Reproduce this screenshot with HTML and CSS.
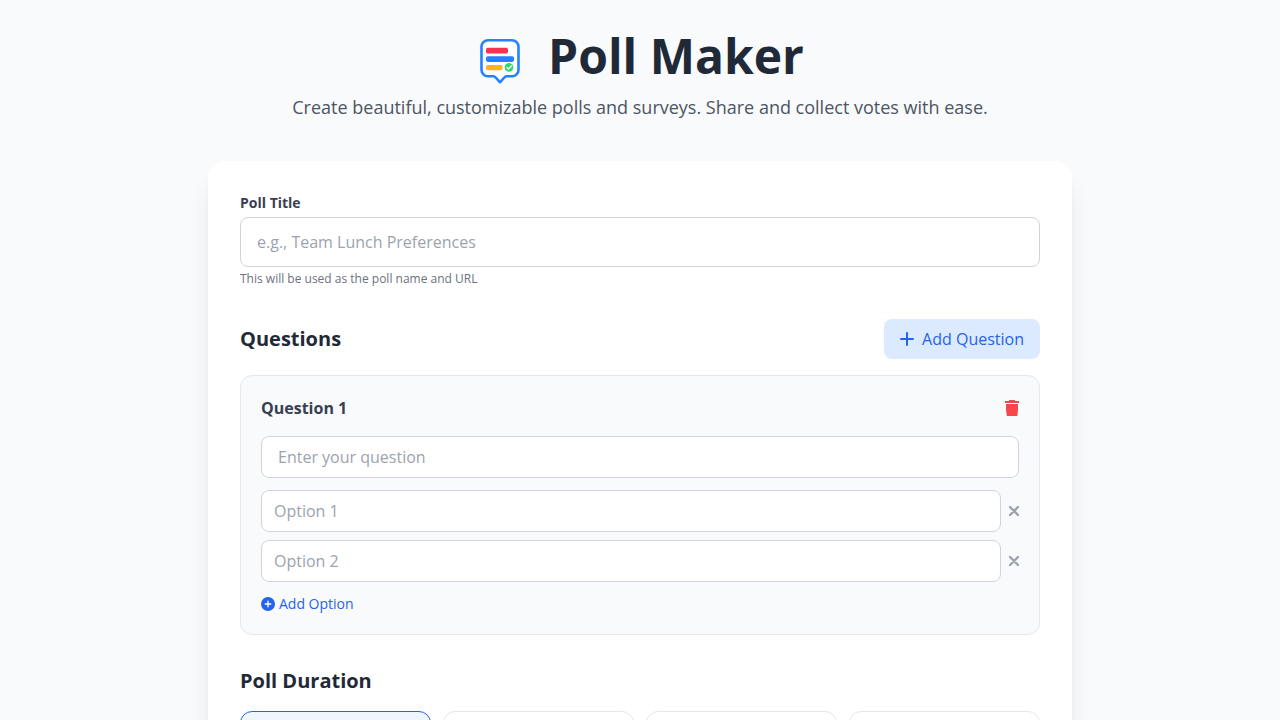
FILE: index.html
```html
<!DOCTYPE html>
<html lang="en">
<head>
    <meta charset="UTF-8">
    <meta name="viewport" content="width=device-width, initial-scale=1.0">
    <title>Poll Maker</title>
    <link rel="stylesheet" href="styles.css">
</head>
<body>
    <div class="container">
        <header class="header">
            <h1>
                <svg class="logo" viewBox="0 0 48 48" aria-hidden="true">
                    <path d="M12 4.200h24a6.500 6.500 0 0 1 6.500 6.500v23a6.500 6.500 0 0 1-6.500 6.500h-5.500c-2.500 0-4.300 4.500-6.500 6-2.200-1.500-4-6-6.500-6H12a6.500 6.500 0 0 1-6.500-6.500v-23A6.500 6.500 0 0 1 12 4.200z" fill="#fff" stroke="#2582ff" stroke-width="2.600" stroke-linejoin="round"/>
                    <rect x="10" y="11.700" width="22" height="5.800" rx="1.800" fill="#f9324f"/>
                    <rect x="10" y="20.300" width="28" height="5.600" rx="1.800" fill="#2380ff"/>
                    <rect x="10" y="29" width="16.500" height="5.200" rx="1.600" fill="#ffb320"/>
                    <circle cx="33" cy="31.400" r="4.300" fill="#34d670"/>
                    <path d="M31 31.500l1.500 1.500 2.800-3" fill="none" stroke="#fff" stroke-width="1.400" stroke-linecap="round" stroke-linejoin="round"/>
                </svg>
                Poll Maker
            </h1>
            <p>Create beautiful, customizable polls and surveys. Share and collect votes with ease.</p>
        </header>

        <form class="card">
            <div class="section">
                <label class="field-label" for="poll-title">Poll Title</label>
                <input class="input input-title" type="text" id="poll-title" placeholder="e.g., Team Lunch Preferences">
                <p class="help">This will be used as the poll name and URL</p>
            </div>

            <div class="section">
                <div class="section-header">
                    <h2>Questions</h2>
                    <button class="add-question" type="button">
                        <svg width="14" height="14" viewBox="0 0 14 14" aria-hidden="true">
                            <path d="M7 1v12M1 7h12" fill="none" stroke="currentColor" stroke-width="2" stroke-linecap="round"/>
                        </svg>
                        Add Question
                    </button>
                </div>

                <div class="question">
                    <div class="question-header">
                        <h3><label for="question-1">Question 1</label></h3>
                        <button class="delete-question" type="button" aria-label="Delete question">
                            <svg width="14" height="16" viewBox="0 0 14 16" aria-hidden="true">
                                <path d="M0 1h4V0h6v1h4v2H0zM1 4h12v6l-.6 6H1.900L1 10z" fill="currentColor"/>
                            </svg>
                        </button>
                    </div>
                    <input class="input" type="text" id="question-1" placeholder="Enter your question">

                    <div class="options">
                        <div class="option">
                            <input class="input" type="text" placeholder="Option 1" aria-label="Option 1">
                            <button type="button" aria-label="Remove option 1">
                                <svg width="10" height="10" viewBox="0 0 10 10" aria-hidden="true">
                                    <path d="M1 1l8 8M9 1L1 9" fill="none" stroke="currentColor" stroke-width="2.400" stroke-linecap="round"/>
                                </svg>
                            </button>
                        </div>
                        <div class="option">
                            <input class="input" type="text" placeholder="Option 2" aria-label="Option 2">
                            <button type="button" aria-label="Remove option 2">
                                <svg width="10" height="10" viewBox="0 0 10 10" aria-hidden="true">
                                    <path d="M1 1l8 8M9 1L1 9" fill="none" stroke="currentColor" stroke-width="2.400" stroke-linecap="round"/>
                                </svg>
                            </button>
                        </div>
                    </div>

                    <button class="add-option" type="button">
                        <svg width="14" height="14" viewBox="0 0 14 14" aria-hidden="true">
                            <circle cx="7" cy="7" r="7" fill="currentColor"/>
                            <path d="M7 4.200v5.600M4.200 7h5.600" fill="none" stroke="#fff" stroke-width="1.300" stroke-linecap="round"/>
                        </svg>
                        Add Option
                    </button>
                </div>
            </div>

            <div class="section">
                <h2>Poll Duration</h2>
                <div class="durations">
                    <label class="duration"><input type="radio" name="duration" checked></label>
                    <label class="duration"><input type="radio" name="duration"></label>
                    <label class="duration"><input type="radio" name="duration"></label>
                    <label class="duration"><input type="radio" name="duration"></label>
                </div>
            </div>
        </form>
    </div>
</body>
</html>
```
FILE: styles.css
```css
* {
    box-sizing: border-box;
    margin: 0;
    padding: 0;
}

body {
    font-family: "Open Sans", sans-serif;
    font-size: 16px;
    line-height: 24px;
    min-height: 100vh;
    background-color: #f9fafb;
    color: #1f2937;
}

button,
input {
    font: inherit;
}

button {
    border: none;
    background: none;
    cursor: pointer;
}

svg {
    display: block;
    flex-shrink: 0;
}

.container {
    max-width: 896px;
    margin: 0 auto;
    padding: 32px 16px;
}

.header {
    text-align: center;
    margin-bottom: 40px;
}

h1 {
    display: flex;
    justify-content: center;
    align-items: flex-start;
    gap: 24px;
    margin-bottom: 9px;
    font-size: 48px;
    line-height: 48px;
    font-weight: 700;
}

.logo {
    width: 48px;
    height: 48px;
    margin-top: 4px;
}

.header p {
    font-size: 18px;
    line-height: 28px;
    color: #4b5563;
}

.card {
    padding: 32px;
    border-radius: 16px;
    background-color: #fff;
    box-shadow: 0 20px 25px -5px rgba(0, 0, 0, 0.1), 0 8px 10px -6px rgba(0, 0, 0, 0.1);
}

.section {
    margin-bottom: 32px;
}

.field-label {
    display: block;
    margin-bottom: 4px;
    font-size: 14px;
    line-height: 20px;
    font-weight: 700;
    color: #374151;
}

.input {
    display: block;
    width: 100%;
    height: 42px;
    padding: 8px 16px;
    border: 1px solid #d1d5db;
    border-radius: 8px;
    background-color: #fff;
    color: #1f2937;
}

.input-title {
    height: 50px;
}

.input::placeholder {
    color: #9ca3af;
}

.help {
    margin-top: 4px;
    font-size: 12px;
    line-height: 16px;
    color: #6b7280;
}

.section-header,
.question-header {
    display: flex;
    justify-content: space-between;
    align-items: center;
    margin-bottom: 16px;
}

h2 {
    font-size: 20px;
    line-height: 28px;
    font-weight: 700;
}

h3 {
    font-size: 16px;
    font-weight: 700;
    color: #374151;
}

.add-question {
    display: flex;
    align-items: center;
    gap: 8px;
    padding: 8px 16px;
    border-radius: 8px;
    background-color: #dbeafe;
    color: #2563eb;
}

.question {
    padding: 20px;
    border: 1px solid #e5e7eb;
    border-radius: 12px;
    background-color: #f9fafb;
}

.delete-question {
    color: #f8474b;
}

.options {
    display: grid;
    gap: 8px;
    margin: 12px 0;
}

.option {
    display: flex;
    align-items: center;
    gap: 8px;
}

.option .input {
    flex: 1;
    padding: 8px 12px;
}

.option button {
    color: #9ca3af;
}

.add-option {
    display: flex;
    align-items: center;
    gap: 4px;
    font-size: 14px;
    line-height: 20px;
    color: #2563eb;
}

.durations {
    display: grid;
    grid-template-columns: repeat(4, 1fr);
    gap: 12px;
    margin-top: 16px;
}

.duration {
    height: 60px;
    border: 1px solid #e5e7eb;
    border-radius: 12px;
    cursor: pointer;
}

.duration:has(input:checked) {
    border-color: #2563eb;
    background-color: #eff6ff;
}

.duration input {
    appearance: none;
}
```
